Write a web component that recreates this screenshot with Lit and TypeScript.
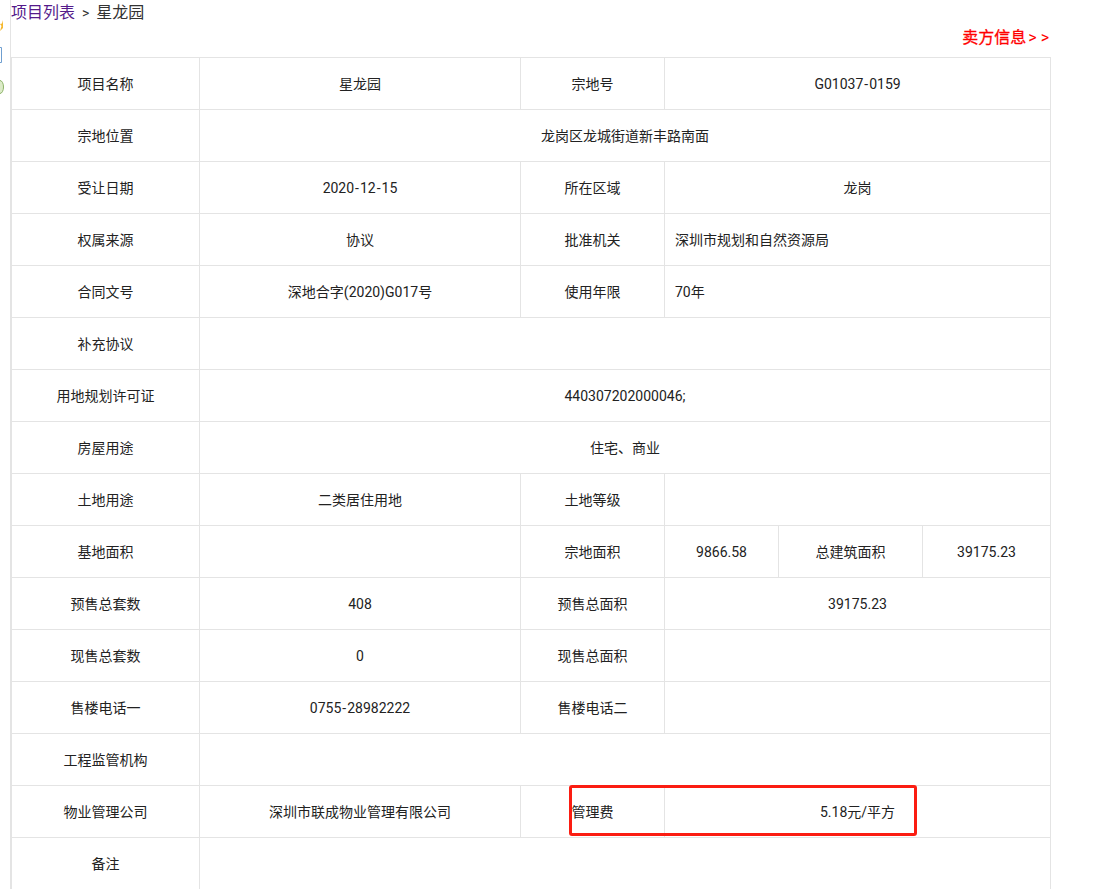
import { LitElement, html, css } from "lit";
import { customElement } from "lit/decorators.js";

type Cell = { t?: string; span?: number; left?: boolean };
const c = (t = "", span = 1, left = false): Cell => ({ t, span, left });
const rows: Cell[][] = [
  [c("项目名称"), c("星龙园"), c("宗地号"), c("G01037-0159", 3)],
  [c("宗地位置"), c("龙岗区龙城街道新丰路南面", 5)],
  [c("受让日期"), c("2020-12-15"), c("所在区域"), c("龙岗", 3)],
  [c("权属来源"), c("协议"), c("批准机关"), c("深圳市规划和自然资源局", 3, true)],
  [c("合同文号"), c("深地合字(2020)G017号"), c("使用年限"), c("70年", 3, true)],
  [c("补充协议"), c("", 5)],
  [c("用地规划许可证"), c("440307202000046;", 5)],
  [c("房屋用途"), c("住宅、商业", 5)],
  [c("土地用途"), c("二类居住用地"), c("土地等级"), c("", 3)],
  [c("基地面积"), c(""), c("宗地面积"), c("9866.58"), c("总建筑面积"), c("39175.23")],
  [c("预售总套数"), c("408"), c("预售总面积"), c("39175.23", 3)],
  [c("现售总套数"), c("0"), c("现售总面积"), c("", 3)],
  [c("售楼电话一"), c("0755-28982222"), c("售楼电话二"), c("", 3)],
  [c("工程监管机构"), c("", 5)],
  [c("物业管理公司"), c("深圳市联成物业管理有限公司"), c("管理费"), c("5.18元/平方", 3)],
  [c("备注"), c("", 5)],
];

@customElement("app-root")
export class AppRoot extends LitElement {
  static styles = css`
    :host {
      display: block;
      height: 889px;
      overflow: hidden;
      background: #fff;
      font-family: Roboto, "Noto Sans CJK SC", sans-serif;
      font-size: 14px;
      color: #222;
    }
    .page {
      display: flex;
      height: 889px;
    }
    .rail {
      flex: none;
      width: 10px;
      border-right: 1px solid #e4e4e4;
      overflow: hidden;
      display: flex;
      flex-direction: column;
      align-items: flex-start;
      padding-top: 20px;
      height: 869px;
    }
    .rail svg { display: block; flex: none; }
    .rail .star { margin-bottom: 16px; }
    .rail .box { margin-bottom: 17px; }
    .main { flex: none; width: 1039px; position: relative; }
    .crumb {
      height: 26px;
      line-height: 26px;
      font-size: 16px;
      color: #333;
      white-space: nowrap;
    }
    .crumb a { color: #551a8b; text-decoration: none; }
    .crumb .sep { margin: 0 7px; font-size: 14px; }
    .sell {
      height: 31px;
      line-height: 24px;
      text-align: right;
      color: #f00;
      font-size: 16px;
      -webkit-text-stroke: 0.3px #f00;
    }
    .sell .arrows { letter-spacing: 4px; margin-right: -3px; margin-left: 2px; font-size: 16px; -webkit-text-stroke: 0; }
    table {
      border-collapse: collapse;
      table-layout: fixed;
      width: 1039px;
    }
    td {
      height: 51px;
      padding: 0 10px;
      line-height: 20px;
      border: 1px solid #e4e4e4;
      text-align: center;
      white-space: nowrap;
    }
    td.left { text-align: left; }
    .dash { padding: 0 1px; }
    .mark {
      position: absolute;
      left: 558px;
      top: 785px;
      width: 342px;
      height: 45px;
      border: 3px solid #fb1d12;
      border-radius: 3px;
      pointer-events: none;
    }
  `;

  private cellText(t = "") {
    const parts = t.split("-");
    return parts.map((p, i) => (i ? html`<span class="dash">-</span>${p}` : p));
  }

  render() {
    const widths = [188, 321, 144, 114, 144, 128];
    return html`<div class="page">
      <div class="rail">
        <svg class="star" width="4" height="11" viewBox="0 0 4 11"><path d="M3 0 L2 3.5 L0 4 L1.5 6 L0 11 L3 8Z" fill="#f5b82e" /></svg>
        <svg class="box" width="3" height="16" viewBox="0 0 3 16"><path d="M0 .5H1.5V15.5H0" fill="none" stroke="#6f9fd0" /></svg>
        <svg width="4" height="14" viewBox="0 0 4 14"><path d="M0 .5A3.5 6.5 0 0 1 0 13.5" fill="#dcebc8" stroke="#8cb368" /></svg>
      </div>
      <div class="main">
        <div class="crumb"><a href="#">项目列表</a><span class="sep">&gt;</span>星龙园</div>
        <div class="sell">卖方信息<span class="arrows">&gt;&gt;</span></div>
        <table>
          <colgroup>${widths.map((w) => html`<col style="width:${w}px" />`)}</colgroup>
          ${rows.map(
            (r) => html`<tr>${r.map(
              (x) => html`<td colspan=${x.span ?? 1} class=${x.left ? "left" : ""}>${this.cellText(x.t)}</td>`
            )}</tr>`
          )}
        </table>
        <div class="mark"></div>
      </div>
    </div>`;
  }
}
